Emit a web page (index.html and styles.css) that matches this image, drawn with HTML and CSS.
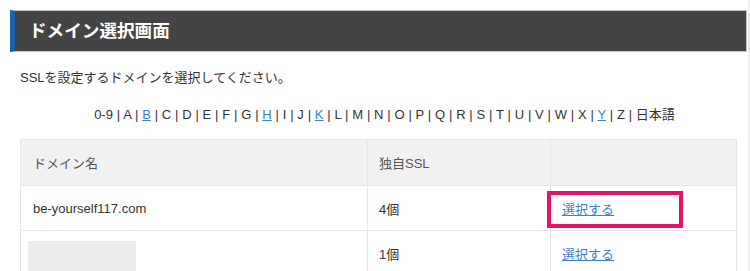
FILE: index.html
```html
<!DOCTYPE html>
<html lang="ja">
<head>
  <meta charset="UTF-8" />
  <meta name="viewport" content="width=device-width, initial-scale=1.0"/>
  <title>ドメイン選択画面</title>
  <link rel="stylesheet" href="styles.css">
</head>
<body>

  <div class="page">
    <!-- 見出し -->
    <h1 class="page-title">ドメイン選択画面</h1>

    <div class="content">
      <p class="lead">SSLを設定するドメインを選択してください。</p>

      <!-- 頭文字ナビ -->
      <p class="initials">
        0-9 | A | <a href="#">B</a> | C | D | E | F | G | <a href="#">H</a> | I | J | <a href="#">K</a> | L | M | N | O | P | Q | R | S | T | U | V | W | X | <a href="#">Y</a> | Z | 日本語
      </p>

      <table class="domain-table">
        <thead>
          <tr>
            <th class="col-name">ドメイン名</th>
            <th class="col-ssl">独自SSL</th>
            <th class="col-action"></th>
          </tr>
        </thead>
        <tbody>
          <tr>
            <td>be-yourself117.com</td>
            <td>4個</td>
            <td class="action-cell">
              <a href="#">選択する</a>
              <span class="highlight"></span>
            </td>
          </tr>
          <tr>
            <td><div class="masked"></div></td>
            <td>1個</td>
            <td class="action-cell"><a href="#">選択する</a></td>
          </tr>
        </tbody>
      </table>
    </div>
  </div>

  <div class="edge"></div>

</body>
</html>
```

FILE: styles.css
```css
/* Reset */
* {
  margin: 0;
  padding: 0;
  box-sizing: border-box;
}

body {
  font-family: "Liberation Sans", "Noto Sans CJK JP", sans-serif;
  font-size: 13px;
  color: #333;
  background-color: #fff;
  display: flex;
  min-height: 100vh;
  overflow: hidden;
}

.page {
  width: 748px;
  padding: 10px 1px 0 10px;
}

/* 右端の線 */
.edge {
  width: 2px;
  background-color: #ececec;
}

/* 見出し */
.page-title {
  height: 42px;
  line-height: 40px;
  padding-left: 14px;
  font-size: 17.6px;
  font-weight: bold;
  color: #fff;
  background-color: #444;
  border: 1px solid #c4c4c4;
  border-left: 5px solid #1b5fae;
}

.content {
  padding: 0 10px;
}

.lead {
  margin-top: 16px;
  line-height: 20px;
}

/* 頭文字ナビ */
.initials {
  margin-top: 17px;
  line-height: 20px;
  text-align: center;
  padding-left: 12px;
  word-spacing: 0.2px;
}

.initials a,
.domain-table a {
  color: #3b7fc4;
  text-decoration: underline;
}

/* テーブル */
.domain-table {
  width: 717px;
  margin-top: 14px;
  border-collapse: collapse;
}

.domain-table th,
.domain-table td {
  border: 1px solid #e6e6e6;
  text-align: left;
  vertical-align: middle;
  padding: 0 11px;
}

.domain-table th {
  height: 46px;
  font-weight: normal;
  color: #555;
  background-color: #f1f1f1;
}

.domain-table td {
  height: 45px;
}

.domain-table td:first-child,
.domain-table th:first-child {
  padding-left: 12px;
}

.col-name { width: 347px; }
.col-ssl { width: 183px; }

.action-cell {
  position: relative;
}

/* 赤枠 */
.highlight {
  position: absolute;
  left: -4px;
  top: 5px;
  width: 136px;
  height: 37px;
  border: 4px solid #e5126b;
}

/* 隠したドメイン */
.masked {
  width: 108px;
  height: 34px;
  margin: 10px 0 0 -5px;
  background-color: #ececec;
}
```
